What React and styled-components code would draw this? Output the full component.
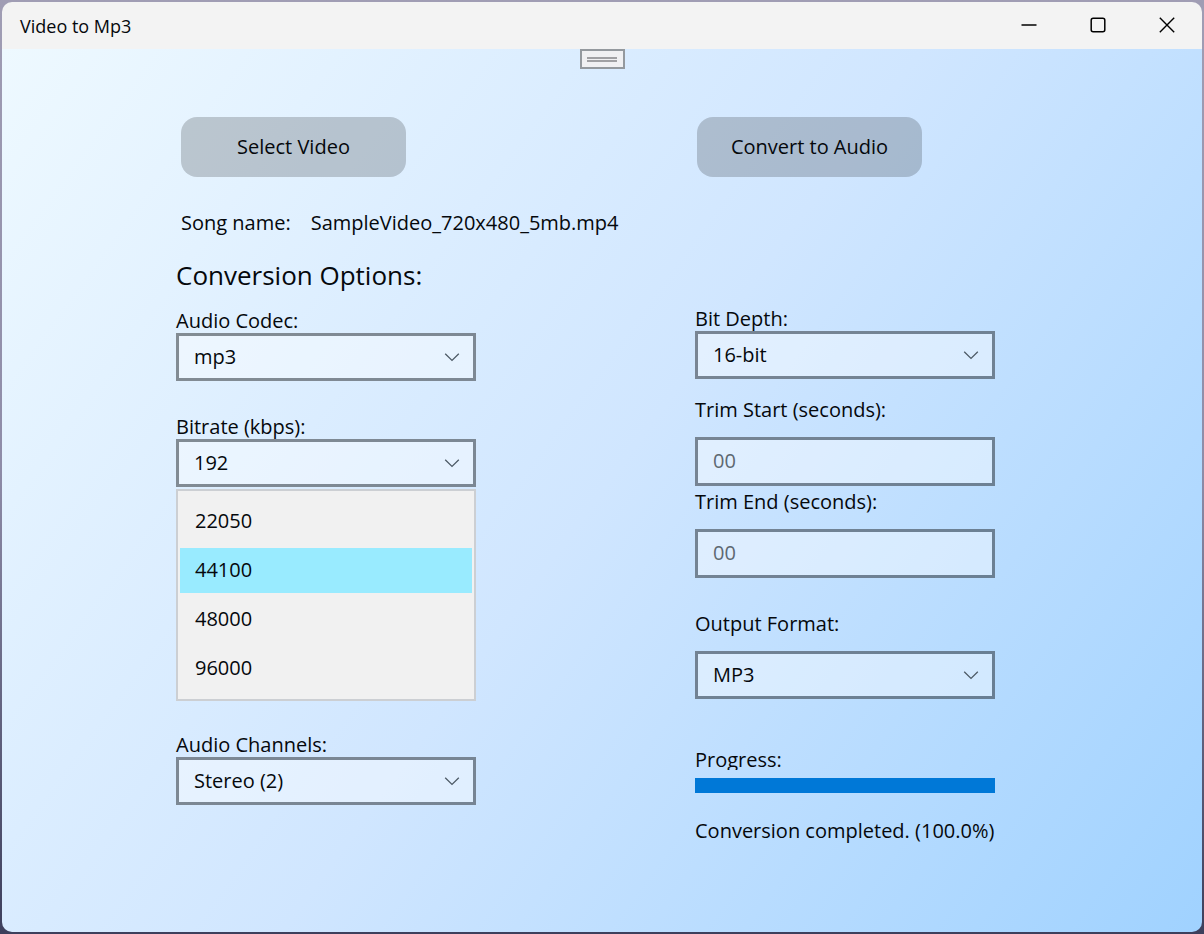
import React, { useState } from 'react'
import styled, { createGlobalStyle } from 'styled-components'

const sampleRates = ['22050', '44100', '48000', '96000']

const Chevron = () => (
    <svg width="16" height="10" viewBox="0 0 16 10" fill="none" stroke="#4d5a66" strokeWidth="1.3">
        <path d="M1.2 1.8 L8 8.4 L14.8 1.8" />
    </svg>
)

const Picker = ({ id, options }) => (
    <PickerBox>
        <select id={id} name={id}>
            {options.map((option) => <option key={option}>{option}</option>)}
        </select>
        <Chevron />
    </PickerBox>
)

const App = () => {
    const [sampleRate, setSampleRate] = useState('44100')

    return (
    <>
        <GlobalStyle />
        <Window>
            <TitleBar>
                <h1>Video to Mp3</h1>
                <div className="controls">
                    <button type="button" aria-label="Minimize">
                        <svg width="16" height="16" viewBox="0 0 16 16" stroke="#000" strokeWidth="1.3">
                            <path d="M0.5 8 H15.5" />
                        </svg>
                    </button>
                    <button type="button" aria-label="Maximize">
                        <svg width="16" height="16" viewBox="0 0 16 16" fill="none" stroke="#000" strokeWidth="1.5">
                            <rect x="1.2" y="1.2" width="13.6" height="13.6" rx="2" />
                        </svg>
                    </button>
                    <button type="button" aria-label="Close">
                        <svg width="16" height="16" viewBox="0 0 16 16" stroke="#000" strokeWidth="1.4">
                            <path d="M0.8 0.8 L15.2 15.2 M15.2 0.8 L0.8 15.2" />
                        </svg>
                    </button>
                </div>
            </TitleBar>

            <Content>
                <DebugHandle type="button" aria-label="Debug toolbar">
                    <span></span>
                </DebugHandle>

                <Columns>
                    <Column>
                        <ActionButton type="button" $indent={5}>Select Video</ActionButton>
                        <SongRow>
                            <span>Song name:</span>
                            <span>SampleVideo_720x480_5mb.mp4</span>
                        </SongRow>
                        <Heading>Conversion Options:</Heading>

                        <Field $space={34}>
                            <label htmlFor="codec">Audio Codec:</label>
                            <Picker id="codec" options={['mp3', 'aac', 'flac']} />
                        </Field>
                        <Field $space={2}>
                            <label htmlFor="bitrate">Bitrate (kbps):</label>
                            <Picker id="bitrate" options={['192', '256', '320']} />
                        </Field>
                        <RateList role="listbox" aria-label="Sample rate">
                            {sampleRates.map((rate) => (
                                <RateOption
                                    key={rate}
                                    type="button"
                                    role="option"
                                    aria-selected={rate === sampleRate}
                                    $selected={rate === sampleRate}
                                    onClick={() => setSampleRate(rate)}
                                >
                                    {rate}
                                </RateOption>
                            ))}
                        </RateList>
                        <Field>
                            <label htmlFor="channels">Audio Channels:</label>
                            <Picker id="channels" options={['Stereo (2)', 'Mono (1)']} />
                        </Field>
                    </Column>

                    <Column>
                        <ActionButton type="button" $indent={2}>Convert to Audio</ActionButton>
                        <Settings>
                            <Field $space={19}>
                                <label htmlFor="depth">Bit Depth:</label>
                                <Picker id="depth" options={['16-bit', '24-bit', '32-bit']} />
                            </Field>
                            <Field $space={4} $gap={15}>
                                <label htmlFor="start">Trim Start (seconds):</label>
                                <TextInput id="start" placeholder="00" />
                            </Field>
                            <Field $space={34} $gap={15}>
                                <label htmlFor="end">Trim End (seconds):</label>
                                <TextInput id="end" placeholder="00" />
                            </Field>
                            <Field $space={49} $gap={15}>
                                <label htmlFor="format">Output Format:</label>
                                <Picker id="format" options={['MP3', 'WAV', 'AAC']} />
                            </Field>
                            <Field $space={26} $gap={8}>
                                <ProgressLabel htmlFor="progress">Progress:</ProgressLabel>
                                <ProgressBar id="progress" value="100" max="100" />
                            </Field>
                            <Status>Conversion completed. (100.0%)</Status>
                        </Settings>
                    </Column>
                </Columns>
            </Content>
        </Window>
    </>
  )
}

export default App

const GlobalStyle = createGlobalStyle`
    * {
        box-sizing: border-box;
        margin: 0;
        padding: 0;
    }

    body {
        min-height: 100vh;
        padding: 2px;
        display: flex;
        background: linear-gradient(#a09db4, #8e8ca8 50%, #3d3f5c);
        font-family: 'Open Sans', 'Noto Sans', sans-serif;
        font-size: 20px;
        line-height: 24px;
        color: #05080c;
    }

    #root {
        flex: 1;
        display: flex;
    }

    button, input, select {
        font: inherit;
        color: inherit;
    }
`

const Window = styled.div`
    flex: 1;
    display: flex;
    flex-direction: column;
    border-radius: 10px;
    overflow: hidden;
`

const TitleBar = styled.header`
    height: 47px;
    padding: 0 1px 0 18px;
    display: flex;
    align-items: center;
    justify-content: space-between;
    background: #f3f3f3;

    h1 {
        font-size: 18px;
        font-weight: 400;
    }

    .controls {
        height: 100%;
        display: flex;
    }

    button {
        width: 69px;
        height: 45px;
        display: flex;
        align-items: center;
        justify-content: center;
        border: none;
        background: transparent;
    }
`

const Content = styled.main`
    flex: 1;
    display: flex;
    flex-direction: column;
    align-items: center;
    gap: 48px;
    background: linear-gradient(126deg, #eef9ff 0%, #d0e6ff 50%, #a0d2ff 100%);
`

const DebugHandle = styled.button`
    width: 45px;
    height: 20px;
    display: flex;
    align-items: center;
    justify-content: center;
    border: 2px solid #94999e;
    background: #f0f0f2;

    span {
        width: 30px;
        height: 5px;
        border-top: 2px solid #a0a0a3;
        border-bottom: 2px solid #a0a0a3;
    }
`

const Columns = styled.div`
    width: 100%;
    padding: 0 0 60px 174px;
    display: grid;
    grid-template-columns: 519fr 507fr;
`

const Column = styled.section`
    display: flex;
    flex-direction: column;
    align-items: flex-start;
`

const ActionButton = styled.button`
    width: 225px;
    height: 60px;
    margin-left: ${({ $indent }) => $indent}px;
    border: none;
    border-radius: 16px;
    background: rgba(0, 0, 0, 0.19);
    cursor: pointer;
`

const SongRow = styled.p`
    margin: 34px 0 24px 5px;
    display: flex;
    gap: 20px;
    white-space: nowrap;
`

const Heading = styled.h2`
    margin-bottom: 18px;
    font-size: 26px;
    line-height: 32px;
    font-weight: 400;
`

const Settings = styled.div`
    width: 100%;
    padding-top: 130px;
`

const Field = styled.div`
    width: 100%;
    max-width: 300px;
    margin-bottom: ${({ $space }) => $space || 0}px;
    display: flex;
    flex-direction: column;
    gap: ${({ $gap }) => $gap || 0}px;
`

const PickerBox = styled.div`
    height: 48px;
    position: relative;

    select {
        width: 100%;
        height: 100%;
        padding: 0 40px 0 15px;
        appearance: none;
        border: 3px solid rgba(0, 0, 0, 0.42);
        border-radius: 0;
        background: rgba(255, 255, 255, 0.4);
        background-clip: padding-box;
    }

    svg {
        position: absolute;
        right: 16px;
        top: 19px;
        pointer-events: none;
    }
`

const TextInput = styled.input`
    width: 100%;
    height: 49px;
    padding: 0 15px 2px;
    border: 3px solid rgba(0, 0, 0, 0.42);
    background: rgba(255, 255, 255, 0.4);
    background-clip: padding-box;

    &::placeholder {
        color: #5d6871;
        opacity: 1;
    }
`

const RateList = styled.div`
    width: 100%;
    max-width: 300px;
    height: 212px;
    margin-bottom: 32px;
    padding: 8px 2px;
    display: flex;
    flex-direction: column;
    gap: 4px;
    border: 2px solid #cccfd3;
    background: #f1f1f1;
`

const RateOption = styled.button`
    height: 45px;
    padding: 0 15px 2px;
    border: none;
    background: ${({ $selected }) => ($selected ? '#99ebff' : 'transparent')};
    text-align: left;
    cursor: pointer;
`

// shorter than its line, so the descender of the "g" is cut off
const ProgressLabel = styled.label`
    height: 22px;
    overflow: hidden;
`

const ProgressBar = styled.progress`
    width: 100%;
    height: 15px;
    display: block;
    appearance: none;
    border: none;

    &::-webkit-progress-bar {
        background: #cccccc;
    }

    &::-webkit-progress-value {
        background: #0078d7;
    }
`

const Status = styled.p`
    white-space: nowrap;
`
